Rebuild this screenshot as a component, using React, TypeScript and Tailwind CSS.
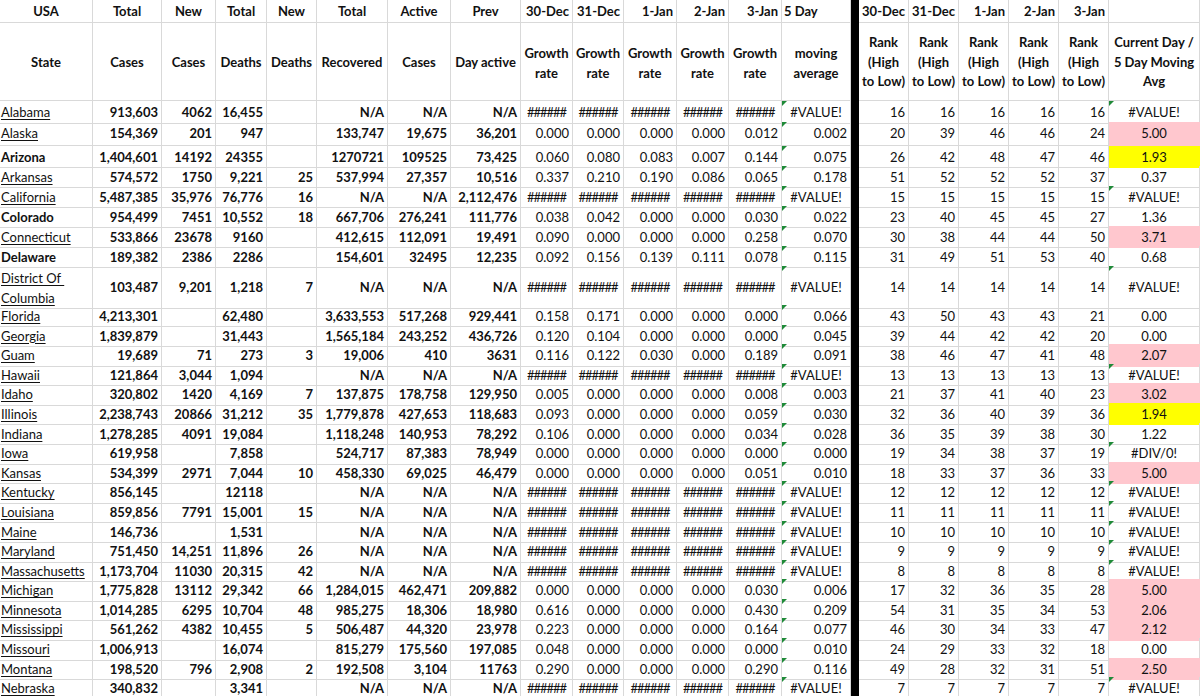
import type { ReactNode } from "react";

const COLS =
  "grid grid-cols-[93px_69px_54px_51px_50px_71px_63px_70px_52px_51px_53px_52px_53px_69px_8px_50px_50px_50px_50px_50px_91px]";

const H = "######";
const E = "#VALUE!";
const H5 = [H, H, H, H, H];

interface Row {
  s: string;
  bold?: boolean;
  h?: string;
  v: string[];
  g: string[];
  m: string;
  r: string[];
  c: string;
  fill?: "pink" | "yellow";
}

const R20 = "h-[20px]";

const rows: Row[] = [
  { s: "Alabama", h: "h-[20.7px]", v: ["913,603", "4062", "16,455", "", "N/A", "N/A", "N/A"], g: H5, m: E, r: ["16", "16", "16", "16", "16"], c: E },
  { s: "Alaska", h: "h-[24px]", v: ["154,369", "201", "947", "", "133,747", "19,675", "36,201"], g: ["0.000", "0.000", "0.000", "0.000", "0.012"], m: "0.002", r: ["20", "39", "46", "46", "24"], c: "5.00", fill: "pink" },
  { s: "Arizona", bold: true, h: R20, v: ["1,404,601", "14192", "24355", "", "1270721", "109525", "73,425"], g: ["0.060", "0.080", "0.083", "0.007", "0.144"], m: "0.075", r: ["26", "42", "48", "47", "46"], c: "1.93", fill: "yellow" },
  { s: "Arkansas", h: R20, v: ["574,572", "1750", "9,221", "25", "537,994", "27,357", "10,516"], g: ["0.337", "0.210", "0.190", "0.086", "0.065"], m: "0.178", r: ["51", "52", "52", "52", "37"], c: "0.37" },
  { s: "California", h: R20, v: ["5,487,385", "35,976", "76,776", "16", "N/A", "N/A", "2,112,476"], g: H5, m: E, r: ["15", "15", "15", "15", "15"], c: E },
  { s: "Colorado", bold: true, h: R20, v: ["954,499", "7451", "10,552", "18", "667,706", "276,241", "111,776"], g: ["0.038", "0.042", "0.000", "0.000", "0.030"], m: "0.022", r: ["23", "40", "45", "45", "27"], c: "1.36" },
  { s: "Connecticut", h: R20, v: ["533,866", "23678", "9160", "", "412,615", "112,091", "19,491"], g: ["0.090", "0.000", "0.000", "0.000", "0.258"], m: "0.070", r: ["30", "38", "44", "44", "50"], c: "3.71", fill: "pink" },
  { s: "Delaware", bold: true, h: R20, v: ["189,382", "2386", "2286", "", "154,601", "32495", "12,235"], g: ["0.092", "0.156", "0.139", "0.111", "0.078"], m: "0.115", r: ["31", "49", "51", "53", "40"], c: "0.68" },
  { s: "District Of Columbia", h: "h-[39.3px]", v: ["103,487", "9,201", "1,218", "7", "N/A", "N/A", "N/A"], g: H5, m: E, r: ["14", "14", "14", "14", "14"], c: E },
  { s: "Florida", v: ["4,213,301", "", "62,480", "", "3,633,553", "517,268", "929,441"], g: ["0.158", "0.171", "0.000", "0.000", "0.000"], m: "0.066", r: ["43", "50", "43", "43", "21"], c: "0.00" },
  { s: "Georgia", v: ["1,839,879", "", "31,443", "", "1,565,184", "243,252", "436,726"], g: ["0.120", "0.104", "0.000", "0.000", "0.000"], m: "0.045", r: ["39", "44", "42", "42", "20"], c: "0.00" },
  { s: "Guam", v: ["19,689", "71", "273", "3", "19,006", "410", "3631"], g: ["0.116", "0.122", "0.030", "0.000", "0.189"], m: "0.091", r: ["38", "46", "47", "41", "48"], c: "2.07", fill: "pink" },
  { s: "Hawaii", v: ["121,864", "3,044", "1,094", "", "N/A", "N/A", "N/A"], g: H5, m: E, r: ["13", "13", "13", "13", "13"], c: E },
  { s: "Idaho", v: ["320,802", "1420", "4,169", "7", "137,875", "178,758", "129,950"], g: ["0.005", "0.000", "0.000", "0.000", "0.008"], m: "0.003", r: ["21", "37", "41", "40", "23"], c: "3.02", fill: "pink" },
  { s: "Illinois", v: ["2,238,743", "20866", "31,212", "35", "1,779,878", "427,653", "118,683"], g: ["0.093", "0.000", "0.000", "0.000", "0.059"], m: "0.030", r: ["32", "36", "40", "39", "36"], c: "1.94", fill: "yellow" },
  { s: "Indiana", v: ["1,278,285", "4091", "19,084", "", "1,118,248", "140,953", "78,292"], g: ["0.106", "0.000", "0.000", "0.000", "0.034"], m: "0.028", r: ["36", "35", "39", "38", "30"], c: "1.22" },
  { s: "Iowa", v: ["619,958", "", "7,858", "", "524,717", "87,383", "78,949"], g: ["0.000", "0.000", "0.000", "0.000", "0.000"], m: "0.000", r: ["19", "34", "38", "37", "19"], c: "#DIV/0!" },
  { s: "Kansas", v: ["534,399", "2971", "7,044", "10", "458,330", "69,025", "46,479"], g: ["0.000", "0.000", "0.000", "0.000", "0.051"], m: "0.010", r: ["18", "33", "37", "36", "33"], c: "5.00", fill: "pink" },
  { s: "Kentucky", v: ["856,145", "", "12118", "", "N/A", "N/A", "N/A"], g: H5, m: E, r: ["12", "12", "12", "12", "12"], c: E },
  { s: "Louisiana", v: ["859,856", "7791", "15,001", "15", "N/A", "N/A", "N/A"], g: H5, m: E, r: ["11", "11", "11", "11", "11"], c: E },
  { s: "Maine", v: ["146,736", "", "1,531", "", "N/A", "N/A", "N/A"], g: H5, m: E, r: ["10", "10", "10", "10", "10"], c: E },
  { s: "Maryland", v: ["751,450", "14,251", "11,896", "26", "N/A", "N/A", "N/A"], g: H5, m: E, r: ["9", "9", "9", "9", "9"], c: E },
  { s: "Massachusetts", v: ["1,173,704", "11030", "20,315", "42", "N/A", "N/A", "N/A"], g: H5, m: E, r: ["8", "8", "8", "8", "8"], c: E },
  { s: "Michigan", v: ["1,775,828", "13112", "29,342", "66", "1,284,015", "462,471", "209,882"], g: ["0.000", "0.000", "0.000", "0.000", "0.030"], m: "0.006", r: ["17", "32", "36", "35", "28"], c: "5.00", fill: "pink" },
  { s: "Minnesota", v: ["1,014,285", "6295", "10,704", "48", "985,275", "18,306", "18,980"], g: ["0.616", "0.000", "0.000", "0.000", "0.430"], m: "0.209", r: ["54", "31", "35", "34", "53"], c: "2.06", fill: "pink" },
  { s: "Mississippi", v: ["561,262", "4382", "10,455", "5", "506,487", "44,320", "23,978"], g: ["0.223", "0.000", "0.000", "0.000", "0.164"], m: "0.077", r: ["46", "30", "34", "33", "47"], c: "2.12", fill: "pink" },
  { s: "Missouri", v: ["1,006,913", "", "16,074", "", "815,279", "175,560", "197,085"], g: ["0.048", "0.000", "0.000", "0.000", "0.000"], m: "0.010", r: ["24", "29", "33", "32", "18"], c: "0.00" },
  { s: "Montana", v: ["198,520", "796", "2,908", "2", "192,508", "3,104", "11763"], g: ["0.290", "0.000", "0.000", "0.000", "0.290"], m: "0.116", r: ["49", "28", "32", "31", "51"], c: "2.50", fill: "pink" },
  { s: "Nebraska", v: ["340,832", "", "3,341", "", "N/A", "N/A", "N/A"], g: H5, m: E, r: ["7", "7", "7", "7", "7"], c: E },
];

function Cell({ children, className = "" }: { children?: ReactNode; className?: string }) {
  return (
    <div
      className={`relative flex items-center whitespace-nowrap border-r border-b border-[#d9d9d9] pt-[2px] ${className}`}
    >
      {children}
    </div>
  );
}

// little green "number stored as text / error" flag in the corner
function Flag() {
  return (
    <span className="absolute left-0 top-0 h-0 w-0 border-t-[5px] border-r-[5px] border-t-[#1f8a38] border-r-transparent" />
  );
}

function Bar() {
  return <div className="bg-black" />;
}

export default function App() {
  const head1 = ["Total", "New", "Total", "New", "Total", "Active", "Prev"];
  const head2 = ["Cases", "Cases", "Deaths", "Deaths", "Recovered", "Cases", "Day active"];
  const dates = ["30-Dec", "31-Dec", "1-Jan", "2-Jan", "3-Jan"];

  return (
    <div className="h-[696px] w-[1200px] overflow-hidden bg-white text-[13px] text-[#111] font-['Lato',sans-serif]">
      {/* header row 1 */}
      <div className={`${COLS} h-[23px] font-bold`}>
        <Cell className="justify-center">USA</Cell>
        {head1.map((t, i) => (
          <Cell key={i} className="justify-center">
            {t}
          </Cell>
        ))}
        {dates.map((d) => (
          <Cell key={d} className="justify-end pr-[3px]">
            {d}
          </Cell>
        ))}
        <Cell className="pl-[2px]">5 Day</Cell>
        <Bar />
        {dates.map((d) => (
          <Cell key={"r" + d} className="justify-end pr-[3px]">
            {d}
          </Cell>
        ))}
        <Cell />
      </div>

      {/* header row 2 */}
      <div className={`${COLS} h-[78px] font-bold`}>
        <Cell className="justify-center">State</Cell>
        {head2.map((t, i) => (
          <Cell key={i} className="justify-center">
            {t}
          </Cell>
        ))}
        {dates.map((d) => (
          <Cell key={d} className="justify-center text-center leading-[20px]">
            <span>
              Growth
              <br />
              rate
            </span>
          </Cell>
        ))}
        <Cell className="justify-center text-center leading-[20px]">
          <span>
            moving
            <br />
            average
          </span>
        </Cell>
        <Bar />
        {dates.map((d) => (
          <Cell key={"r" + d} className="justify-center text-center leading-[19.5px]">
            <span>
              Rank
              <br />
              (High
              <br />
              to Low)
            </span>
          </Cell>
        ))}
        <Cell className="justify-center text-center leading-[19.5px]">
          <span>
            Current Day /
            <br />5 Day Moving
            <br />
            Avg
          </span>
        </Cell>
      </div>

      {/* data rows */}
      {rows.map((row) => {
        const fill =
          row.fill === "pink"
            ? "bg-[#ffc7ce] border-[#ffc7ce]"
            : row.fill === "yellow"
              ? "bg-[#ffff00] border-[#ffff00]"
              : "";
        return (
          <div key={row.s} className={`${COLS} ${row.h ?? "h-[19.6px]"}`}>
            <Cell className={`pl-[1px] ${row.bold ? "font-bold" : ""}`}>
              {row.bold ? (
                row.s
              ) : row.s === "District Of Columbia" ? (
                <span className="leading-[20px] underline underline-offset-[2px]">
                  District Of&nbsp;
                  <br />
                  Columbia
                </span>
              ) : (
                <span className="underline underline-offset-[2px]">{row.s}</span>
              )}
            </Cell>
            {row.v.map((x, i) => (
              <Cell key={i} className="justify-end pr-[3px] font-bold">
                {x}
              </Cell>
            ))}
            {row.g.map((x, i) => (
              <Cell
                key={"g" + i}
                className={x === H ? "justify-center tracking-[-1px]" : "justify-end pr-[3px]"}
              >
                {x}
              </Cell>
            ))}
            <Cell className={row.m.startsWith("#") ? "justify-center" : "justify-end pr-[3px]"}>
              <Flag />
              {row.m}
            </Cell>
            <Bar />
            {row.r.map((x, i) => (
              <Cell key={"r" + i} className="justify-end pr-[3px]">
                {x}
              </Cell>
            ))}
            <Cell className={`justify-center ${fill}`}>
              {row.c.startsWith("#") && <Flag />}
              {row.c}
            </Cell>
          </div>
        );
      })}
    </div>
  );
}
